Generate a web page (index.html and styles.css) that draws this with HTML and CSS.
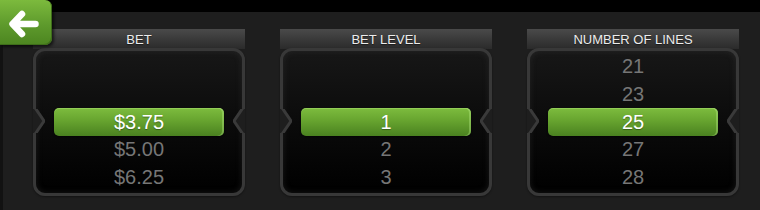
FILE: index.html
```html
<!DOCTYPE html>
<html>
<head>
<meta charset="utf-8">
<link rel="stylesheet" href="styles.css">
</head>
<body>
<div class="screen">
  <div class="topband"></div>
  <button class="back" aria-label="Back">
    <svg width="52" height="45" viewBox="0 0 52 45">
      <path d="M22 14 L12.5 24 L22 34 M13 24 L35.5 24" fill="none" stroke="#fff" stroke-width="6.5" stroke-linecap="round" stroke-linejoin="round"/>
    </svg>
  </button>
  <div class="panels">
    <section class="panel">
      <div class="head">BET</div>
      <div class="box">
        <svg class="notch notch-l" width="12" height="24" viewBox="0 0 12 24"><path d="M0 -1 L1.5 -1 L11 12 L1.5 25 L0 25 Z" fill="#1e1e1e"/><path d="M1.5 -2 L11 12 L1.5 26" fill="none" stroke="#3a3a3a" stroke-width="3"/></svg>
        <svg class="notch notch-r" width="12" height="24" viewBox="0 0 12 24"><path d="M12 -1 L10.5 -1 L1 12 L10.5 25 L12 25 Z" fill="#1e1e1e"/><path d="M10.5 -2 L1 12 L10.5 26" fill="none" stroke="#3a3a3a" stroke-width="3"/></svg>
        <div class="row"></div>
        <div class="row"></div>
        <div class="row sel">$3.75</div>
        <div class="row">$5.00</div>
        <div class="row">$6.25</div>
      </div>
    </section>
    <section class="panel">
      <div class="head">BET LEVEL</div>
      <div class="box">
        <svg class="notch notch-l" width="12" height="24" viewBox="0 0 12 24"><path d="M0 -1 L1.5 -1 L11 12 L1.5 25 L0 25 Z" fill="#1e1e1e"/><path d="M1.5 -2 L11 12 L1.5 26" fill="none" stroke="#3a3a3a" stroke-width="3"/></svg>
        <svg class="notch notch-r" width="12" height="24" viewBox="0 0 12 24"><path d="M12 -1 L10.5 -1 L1 12 L10.5 25 L12 25 Z" fill="#1e1e1e"/><path d="M10.5 -2 L1 12 L10.5 26" fill="none" stroke="#3a3a3a" stroke-width="3"/></svg>
        <div class="row"></div>
        <div class="row"></div>
        <div class="row sel">1</div>
        <div class="row">2</div>
        <div class="row">3</div>
      </div>
    </section>
    <section class="panel">
      <div class="head">NUMBER OF LINES</div>
      <div class="box">
        <svg class="notch notch-l" width="12" height="24" viewBox="0 0 12 24"><path d="M0 -1 L1.5 -1 L11 12 L1.5 25 L0 25 Z" fill="#1e1e1e"/><path d="M1.5 -2 L11 12 L1.5 26" fill="none" stroke="#3a3a3a" stroke-width="3"/></svg>
        <svg class="notch notch-r" width="12" height="24" viewBox="0 0 12 24"><path d="M12 -1 L10.5 -1 L1 12 L10.5 25 L12 25 Z" fill="#1e1e1e"/><path d="M10.5 -2 L1 12 L10.5 26" fill="none" stroke="#3a3a3a" stroke-width="3"/></svg>
        <div class="row">21</div>
        <div class="row">23</div>
        <div class="row sel">25</div>
        <div class="row">27</div>
        <div class="row">28</div>
      </div>
    </section>
  </div>
</div>
</body>
</html>
```

FILE: styles.css
```css
html, body {
  margin: 0;
  padding: 0;
  background: #1e1e1e;
}
.screen {
  position: relative;
  width: 760px;
  height: 210px;
  overflow: hidden;
  background: #1e1e1e;
  box-shadow: inset 3px 0 0 #121212;
  font-family: "Liberation Sans", Arial, sans-serif;
}
.topband {
  height: 12px;
  background: #000;
}
.back {
  position: absolute;
  left: 0;
  top: 0;
  width: 52px;
  height: 45px;
  padding: 0;
  border: none;
  border-radius: 0 7px 7px 0;
  background: linear-gradient(#7cba3d, #5e9a2c 55%, #4c8520);
  box-shadow: inset -1px -1px 0 #3e6d1a, 2px 2px 3px rgba(0,0,0,0.6);
  z-index: 2;
}
.back svg {
  display: block;
}
.panels {
  display: flex;
  gap: 35px;
  padding: 17px 0 0 33px;
}
.panel {
  width: 212px;
}
.head {
  height: 20px;
  line-height: 21px;
  text-align: center;
  font-size: 13px;
  color: #ececec;
  background: linear-gradient(#4a4a4a, #3a3a3a 50%, #2b2b2b);
  text-shadow: 0 1px 1px rgba(0,0,0,0.5);
}
.box {
  position: relative;
  margin-top: -1px;
  height: 140px;
  padding-top: 2px;
  border: 3px solid #383838;
  border-radius: 12px;
  background: linear-gradient(#171717, #0b0b0b 50%, #000);
  box-shadow: inset 0 0 6px rgba(70,70,70,0.35), 0 1px 2px rgba(0,0,0,0.4);
}
.notch {
  position: absolute;
  top: 58px;
}
.notch-l { left: -3px; }
.notch-r { right: -3px; }
.row {
  height: 27.5px;
  line-height: 27.5px;
  text-align: center;
  font-size: 20px;
  color: #767676;
}
.row.sel {
  height: 28px;
  line-height: 28px;
  margin: 0 18px;
  border-radius: 5px;
  color: #fff;
  background: linear-gradient(#7dbc3e, #67a42f 45%, #4a8120);
  box-shadow: inset -2px 0 0 rgba(190,240,140,0.35), inset 0 1px 0 rgba(200,250,150,0.3), 0 1px 2px rgba(0,0,0,0.6);
  text-shadow: 0 1px 1px rgba(0,0,0,0.35);
}
```
